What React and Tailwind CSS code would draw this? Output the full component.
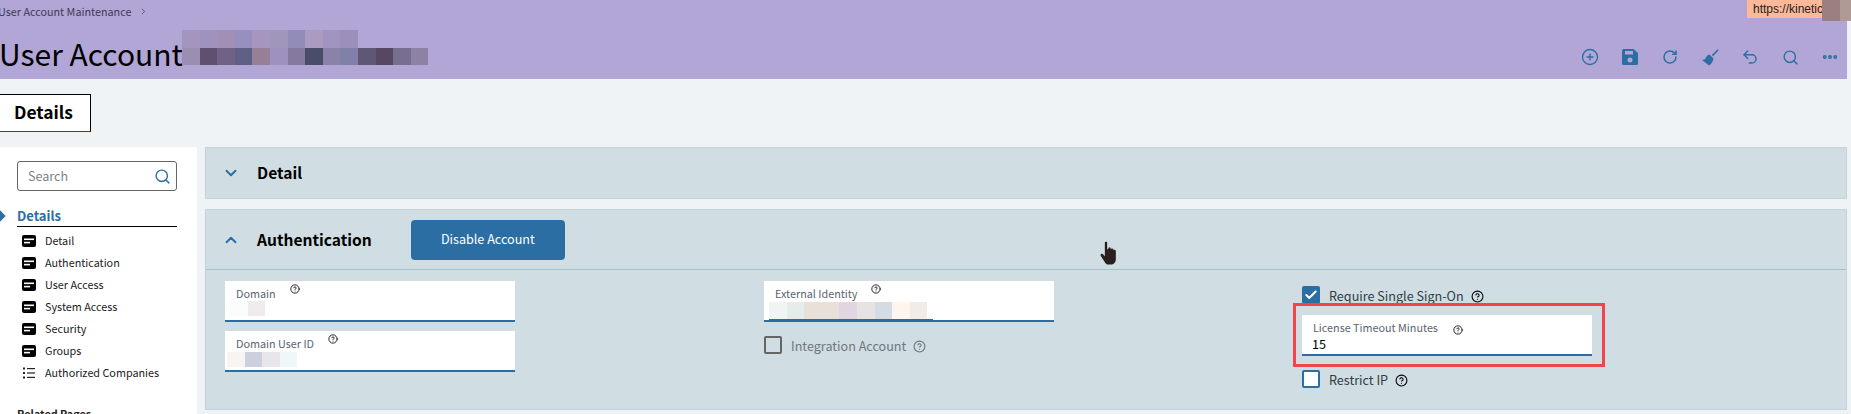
import React from 'react'
import { CirclePlus, RotateCw, Undo2, Search, Ellipsis, ChevronDown, ChevronUp, ChevronRight, CircleHelp, Check } from 'lucide-react'

const titleTop = ['#a395bd', '#9f92bd', '#a18fb5', '#9590bd', '#a595bf', '#a095bb', '#928cbb', '#ab9bc0', '#a294c0', '#9c8fba']
const titleBottom = ['#9a8fb0', '#5e5170', '#6f6285', '#5e6085', '#968095', '#9e90c0', '#8579a0', '#4b4b6a', '#8a82a8', '#8080a8', '#605675', '#564860', '#786e90', '#8d82a5']

const sections = ['Detail', 'Authentication', 'User Access', 'System Access', 'Security', 'Groups']

function Mosaic({ colors, cell = 'w-[17.6px]', height = 'h-[15px]' }) {
  return (
    <div className="flex">
      {colors.map((c, i) => <div key={i} className={`${cell} ${height}`} style={{ backgroundColor: c }} />)}
    </div>
  )
}

function SaveIcon() {
  return (
    <svg width="16" height="16" viewBox="0 0 16 16" fill="#2a6ea3">
      <path fillRule="evenodd" d="M1.5 0h10L16 4v10.5a1.5 1.5 0 0 1-1.5 1.5h-13A1.5 1.5 0 0 1 0 14.5v-13A1.5 1.5 0 0 1 1.5 0zM3 2v3.500h8V2zm5 6.500a2.500 2.500 0 1 0 0 5 2.500 2.500 0 0 0 0-5z" />
    </svg>
  )
}

function BroomIcon() {
  return (
    <svg width="17" height="17" viewBox="0 0 17 17" fill="#2a6ea3">
      <path d="M15.7 0.300l1 1-5.700 6-1.200-1.200z" />
      <path d="M7.500 5.500l4 4c-.5 2.500-2 5.500-4.500 7L0 11c1-.3 2.500 0 3.500-1.500C4 8 5.500 5.500 7.500 5.500z" />
    </svg>
  )
}

function SectionIcon() {
  return (
    <svg width="14" height="12" viewBox="0 0 14 12">
      <rect width="14" height="12" rx="2" fill="#000" />
      <rect x="2" y="3.500" width="10" height="1.600" fill="#fff" />
      <rect x="2" y="6.800" width="6" height="1.600" fill="#fff" />
    </svg>
  )
}

function ListIcon() {
  return (
    <svg width="12" height="12" viewBox="0 0 12 12" fill="#222">
      <rect x="0" y="0.500" width="2" height="2" />
      <rect x="0" y="5" width="2" height="2" />
      <rect x="0" y="9.500" width="2" height="2" />
      <rect x="4" y="1" width="8" height="1.200" />
      <rect x="4" y="5.400" width="8" height="1.200" />
      <rect x="4" y="9.800" width="8" height="1.200" />
    </svg>
  )
}

function HandCursor() {
  return (
    <svg className="absolute left-[1100px] top-[241px]" width="18" height="24" viewBox="0 0 19 26" fill="#2a1f1f">
      <path d="M5 1.500C5 .5 7.500 .5 7.500 1.500V9h1l.5-1.500c.5-.8 2-.8 2.300 0l.2 1.500.5-.5c.7-.6 2-.5 2.200.5l.1 1 .6-.3c.8-.3 2 .2 2 1.200V20c0 3-2.500 5.500-5 5.500H9c-2 0-3-1-4-2.500L.5 16c-.7-1.200 1-2.800 2.200-1.800L5 16.500z" />
    </svg>
  )
}

function Field({ label, labelGap, helpTop = 'mt-[-1px]', children }) {
  return (
    <div className="relative w-[290px] h-[41px] bg-white border-b-2 border-[#2a6ea3]">
      <div className="pl-[11px] pt-[4px] flex items-start text-[10.8px] leading-[16px] text-[#5a6570]">
        <span>{label}</span>
        <CircleHelp size={10} strokeWidth={2} className={`${labelGap} ${helpTop} text-black`} />
      </div>
      {children}
    </div>
  )
}

function CheckRow({ label, checked, muted, blue }) {
  return (
    <div className={`flex items-center h-[18px] text-[12.6px] ${muted ? 'text-[#6f767c]' : 'text-[#333b42]'}`}>
      {checked ? (
        <div className="w-[18px] h-[18px] rounded-[2px] bg-[#2a6ea3] flex items-center justify-center">
          <Check size={14} strokeWidth={3.500} className="text-white" />
        </div>
      ) : (
        <div className={`w-[18px] h-[18px] rounded-[2px] border-2 ${blue ? 'border-[#2a6ea3] bg-white' : 'border-[#666]'}`} />
      )}
      <span className="ml-[9px] pt-[2px]">{label}</span>
      <CircleHelp size={13} strokeWidth={2} className={`ml-[7px] mt-[2px] ${muted ? 'text-[#6f767c]' : 'text-black'}`} />
    </div>
  )
}

function ToolIcon({ children }) {
  return <div className="w-[40px] flex justify-center">{children}</div>
}

export default function App() {
  return (
    <div className="relative w-[1851px] h-[414px] overflow-hidden bg-[#eff3f6] text-black" style={{ fontFamily: '"Noto Sans CJK SC", "Noto Sans", sans-serif' }}>
      <header className="relative w-[1847px] h-[79px] bg-[#b2a6d7]">
        <div className="flex items-center h-[22px] ml-[-2px] text-[10.8px] text-[#3f3a55]">
          <span>User Account Maintenance</span>
          <ChevronRight size={9} strokeWidth={2} className="ml-[8px]" />
        </div>
        <div className="flex items-start">
          <h1 className="w-[183px] ml-[-1px] shrink-0 mt-[11px] text-[30px] leading-[40px] font-normal whitespace-nowrap">User Account</h1>
          <div className="mt-[8px]">
            <Mosaic colors={titleTop} height="h-[18px]" />
            <Mosaic colors={titleBottom} height="h-[17px]" />
          </div>
          <div className="ml-auto mt-[26px] mr-[-3px] flex items-center text-[#2a6ea3]">
            <ToolIcon><CirclePlus size={18} strokeWidth={1.800} /></ToolIcon>
            <ToolIcon><SaveIcon /></ToolIcon>
            <ToolIcon><RotateCw size={16} strokeWidth={2.200} /></ToolIcon>
            <ToolIcon><BroomIcon /></ToolIcon>
            <ToolIcon><Undo2 size={18} strokeWidth={1.900} /></ToolIcon>
            <ToolIcon><Search size={17} strokeWidth={2} /></ToolIcon>
            <ToolIcon><Ellipsis size={18} strokeWidth={3.200} /></ToolIcon>
          </div>
        </div>
      </header>

      <div className="absolute left-[1747px] top-0 w-[104px] h-[18px] bg-[#fbb999] pl-[6px] text-[12px] leading-[18px] text-[#222]" style={{ fontFamily: '"Liberation Sans", sans-serif' }}>
        https://kinetic
      </div>
      <div className="absolute left-[1822px] top-0 flex">
        <div className="w-[18px] h-[21px] bg-[#9a8080]" />
        <div className="w-[11px] h-[21px] bg-[#b09a95]" />
      </div>

      <div className="pt-[15px] h-[68px]">
        <div className="ml-[-1px] w-[92px] h-[38px] bg-white border border-black border-b-[#1f4d6e] pl-[14px] text-[17.4px] leading-[34px] font-semibold">
          Details
        </div>
      </div>

      <div className="flex gap-[8px]">
        <aside className="relative w-[197px] h-[267px] shrink-0 bg-white pl-[17px] pt-[14px]">
          <div className="w-[160px] h-[30px] rounded-[3px] border border-[#666] flex items-center justify-between pl-[10px] pr-[5px] text-[12.6px] text-[#7b8287]">
            <span>Search</span>
            <Search size={17} strokeWidth={2} className="text-[#2a6ea3]" />
          </div>
          <div className="relative mt-[16px] w-[160px] h-[20px] border-b border-black text-[13px] leading-[18px] font-semibold text-[#2a6ea3]">
            <div className="absolute left-[-21px] top-[5px] w-[8px] h-[8px] rotate-45 bg-[#2a6ea3]" />
            Details
          </div>
          <ul className="mt-[3px]">
            {sections.map(s => (
              <li key={s} className="flex items-center h-[22px] pl-[5px] text-[10.8px] text-[#222]">
                <SectionIcon />
                <span className="ml-[9px] pb-[2px]">{s}</span>
              </li>
            ))}
            <li className="flex items-center h-[22px] pl-[6px] text-[10.8px] text-[#222]">
              <ListIcon />
              <span className="ml-[10px] pb-[2px]">Authorized Companies</span>
            </li>
          </ul>
          <div className="mt-[21px] text-[10.8px] leading-[16px] font-semibold text-[#222]">Related Pages</div>
        </aside>

        <main className="w-[1642px] shrink-0">
          <section className="h-[52px] bg-[#d0dde2] border border-[#c5d2d7] flex items-center pl-[16px]">
            <ChevronDown size={18} strokeWidth={2.500} className="text-[#2a6ea3]" />
            <span className="ml-[17px] text-[15.6px] font-semibold">Detail</span>
          </section>

          <section className="mt-[10px] h-[201px] bg-[#d0dde2] border border-[#c5d2d7]">
            <div className="h-[60px] flex items-center pl-[16px] border-b border-[#a3c0cd]">
              <ChevronUp size={18} strokeWidth={2.500} className="text-[#2a6ea3]" />
              <span className="ml-[17px] text-[15.6px] font-semibold">Authentication</span>
              <button className="ml-[39px] w-[154px] h-[40px] rounded-[4px] bg-[#2a6ea3] text-white text-[12.6px]">Disable Account</button>
            </div>

            <div className="flex pt-[11px] pl-[19px]">
              <div className="w-[539px] flex flex-col gap-[9px]">
                <Field label="Domain" labelGap="ml-[14px]">
                  <div className="absolute left-[5px] top-[20px]"><Mosaic colors={['#fbfdfd', '#f0ecec']} /></div>
                </Field>
                <Field label="Domain User ID" labelGap="ml-[14px]">
                  <div className="absolute left-[2px] top-[21px]"><Mosaic colors={['#f8f4f2', '#ccd0dc', '#e8e6ea', '#f0f7fb']} /></div>
                </Field>
              </div>
              <div className="w-[538px]">
                <Field label="External Identity" labelGap="ml-[14px]">
                  <div className="absolute left-[5px] top-[21px]"><Mosaic colors={['#f0f4f3', '#e5ecea', '#e9e0da', '#e9e0d8', '#e0d5e0', '#e8e3e3', '#d5dbe3', '#fdf5ee', '#f3ebe6']} height="h-[18px]" /></div>
                  <div className="absolute left-[5px] bottom-0 w-[164px] h-[1px] bg-[#2a6ea3]" />
                </Field>
                <div className="mt-[14px]"><CheckRow label="Integration Account" muted /></div>
              </div>
              <div className="pt-[5px]">
                <CheckRow label="Require Single Sign-On" checked />
                <div className="relative mt-[11px]">
                  <div className="absolute left-[-9px] top-[-12px] w-[312px] h-[64px] border-[3px] border-[#f5434a]" />
                  <Field label="License Timeout Minutes" labelGap="ml-[15px]" helpTop="mt-[6px]">
                    <div className="pl-[10px] text-[12.6px] leading-[18px]">15</div>
                  </Field>
                </div>
                <div className="mt-[14px]"><CheckRow label="Restrict IP" blue /></div>
              </div>
            </div>
          </section>
        </main>
      </div>
      <HandCursor />
    </div>
  )
}
